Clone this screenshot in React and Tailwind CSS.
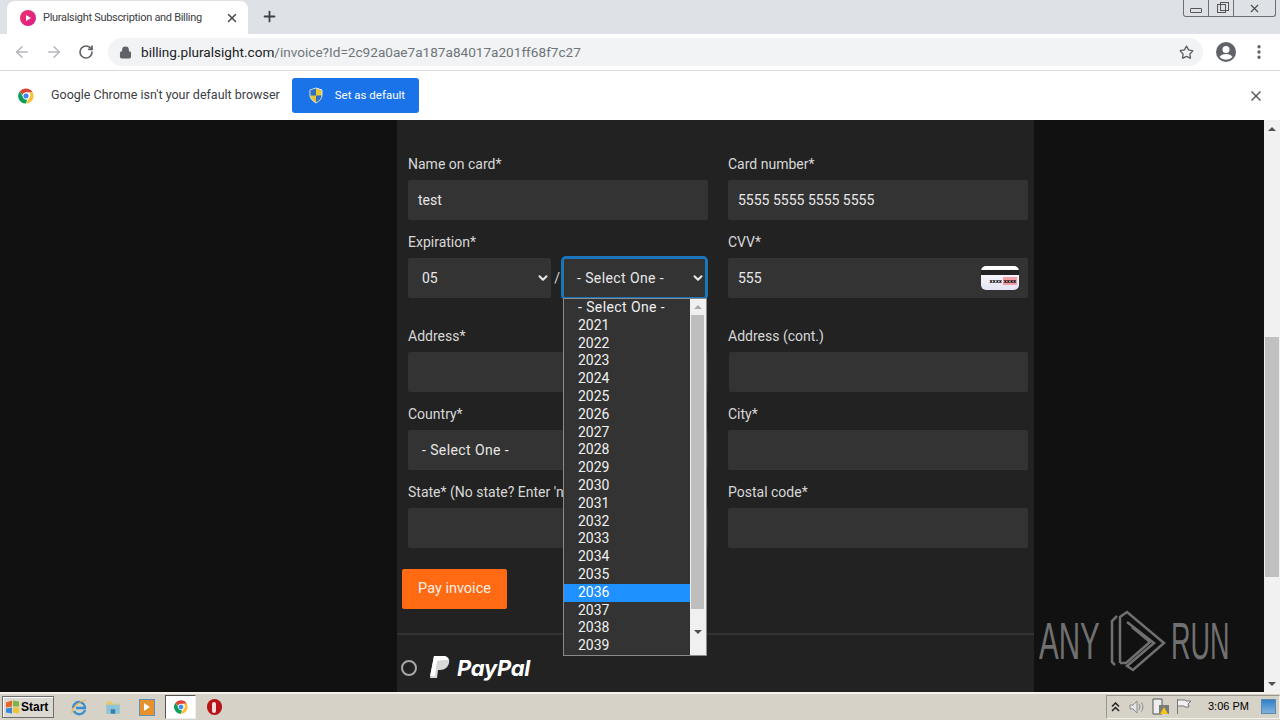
import { ArrowLeft, ArrowRight, RotateCw, Lock, Star, MoreVertical, X, Plus, ChevronDown } from 'lucide-react'

const years = ['- Select One -', '2021', '2022', '2023', '2024', '2025', '2026', '2027', '2028', '2029', '2030', '2031', '2032', '2033', '2034', '2035', '2036', '2037', '2038', '2039']

function ChromeLogo({ size = 18 }) {
  return (
    <svg width={size} height={size} viewBox="0 0 48 48">
      <path d="M24 4a20 20 0 0 1 17.3 10H24a10 10 0 0 0-9.6 7.2L7.6 11.5A20 20 0 0 1 24 4z" fill="#db4437" />
      <path d="M41.3 14A20 20 0 0 1 24 44l8.6-15a10 10 0 0 0-.6-15z" fill="#fbc02d" />
      <path d="M24 44A20 20 0 0 1 7.6 11.5l8.7 15A10 10 0 0 0 27 33.6z" fill="#0f9d58" />
      <circle cx="24" cy="24" r="8" fill="#4285f4" stroke="#fff" strokeWidth="2" />
    </svg>
  )
}

function Field({ label, value, className = '', inputClassName = '', children }) {
  return (
    <div className={`flex flex-col ${className}`}>
      <label className="h-[20px] text-[14px] leading-[20px] text-[#d8d8d8] whitespace-nowrap">{label}</label>
      <div className={`relative mt-[6px] flex h-[40px] items-center rounded-[2px] bg-[#333333] pl-[10px] text-[14px] text-[#e8e8e8] ${inputClassName}`}>
        {value}
        {children}
      </div>
    </div>
  )
}

function FakeSelect({ value, className = '' }) {
  return (
    <div className={`flex items-center justify-between rounded-[2px] bg-[#333333] text-[14px] text-[#e8e8e8] ${className}`}>
      <span>{value}</span>
      <ChevronDown size={14} strokeWidth={3.5} className="text-[#e8e8e8]" />
    </div>
  )
}

function YearList() {
  return (
    <div className="absolute left-[563px] top-[178px] z-10 flex h-[358px] w-[144px] border border-[#8a8a8a] bg-[#333333]">
      <ul className="flex-1 text-[14px] text-[#f0f0f0]">
        {years.map((y, i) => (
          <li key={y} className={`h-[17.8px] pl-[14px] leading-[16px] ${i === 0 ? 'tracking-[0.4px]' : ''} ${y === '2036' ? 'bg-[#1e90ff] text-white' : ''}`}>{y}</li>
        ))}
      </ul>
      <div className="flex w-[16px] flex-col bg-[#f0f0f0]">
        <div className="flex h-[16px] items-center justify-center">
          <div className="h-0 w-0 border-x-[4px] border-b-[4px] border-x-transparent border-b-[#a8a8a8]" />
        </div>
        <div className="ml-[1px] h-[294px] w-[13px] bg-[#bebebe]" />
        <div className="flex flex-1 items-center justify-center">
          <div className="h-0 w-0 border-x-[4px] border-t-[4px] border-x-transparent border-t-[#505050]" />
        </div>
      </div>
    </div>
  )
}

function AnyRun() {
  return (
    <div className="absolute left-[1039px] top-[490px] flex h-[62px] items-center text-[#707070] [font-family:'Liberation_Sans',sans-serif]">
      <span className="w-[71px] origin-left scale-x-[0.58] whitespace-nowrap text-[51px] leading-none">ANY</span>
      <svg width="56" height="62" viewBox="0 0 56 62" fill="none" stroke="currentColor" strokeWidth="2.5">
        <path d="M7 6 2 11v41l3 3" />
        <path d="M10 53V7l7-5 37 31-31 27-6-4 27-23-27-21" />
        <path d="M10 53h6l24-21-18-15" />
      </svg>
      <span className="ml-[5px] w-[58px] origin-left scale-x-[0.53] whitespace-nowrap text-[51px] leading-none">RUN</span>
    </div>
  )
}

function Taskbar() {
  return (
    <div className="flex h-[28px] items-center border-t-2 border-t-[#f4f2ec] bg-[#d6d2c8] [font-family:'Liberation_Sans',sans-serif]">
      <div className="ml-[2px] flex h-[22px] w-[52px] items-center border border-[#6d6d6d] bg-[#dcd9d0] pl-[2px] text-[12px] font-bold text-black shadow-[inset_1px_1px_0_#fff]">
        <svg width="16" height="16" viewBox="0 0 16 15">
          <path d="M1 3 7 1v6L1 8z" fill="#e8622c" />
          <path d="M8 1l6 1v5H8z" fill="#7db343" />
          <path d="M1 9l6-1v6l-6-1z" fill="#3a86d8" />
          <path d="M8 8h6v6l-6-1z" fill="#f2c431" />
        </svg>
        Start
      </div>
      <div className="ml-[12px] flex w-[26px] justify-center">
        <svg width="18" height="18" viewBox="0 0 18 18" fill="none">
          <path d="M3 10a6 6 0 0 1 12 0H6M15 12a6 6 0 0 1-11 1" stroke="#3b8fd0" strokeWidth="2.4" />
          <path d="M2 15C1 11 9 3 16 2" stroke="#e5b53a" strokeWidth="1.2" />
        </svg>
      </div>
      <div className="ml-[8px] flex w-[26px] justify-center">
        <svg width="18" height="18" viewBox="0 0 16 16">
          <path d="M2 3h5l1 2h6v9H2z" fill="#e6c96c" />
          <path d="M2 6h12v8H2z" fill="#8cc4dc" />
          <path d="M6 10h4v4H6z" fill="#3b7fa8" />
        </svg>
      </div>
      <div className="ml-[8px] flex w-[26px] justify-center">
        <div className="flex h-[17px] w-[16px] items-center justify-center border border-[#5a93c0] bg-[#e8902c]">
          <div className="h-0 w-0 border-y-[4px] border-l-[6px] border-y-transparent border-l-white" />
        </div>
      </div>
      <div className="ml-[5px] flex h-[24px] w-[31px] items-center justify-center border border-[#555] border-b-[#eee] border-r-[#eee] bg-white">
        <ChromeLogo size={16} />
      </div>
      <div className="ml-[5px] flex w-[26px] justify-center">
        <div className="flex h-[16px] w-[15px] items-center justify-center rounded-full bg-[#b81218]">
          <div className="h-[11px] w-[4px] rounded-full bg-[#f2dede]" />
        </div>
      </div>
      <div className="ml-auto mb-[1px] flex h-[24px] w-[174px] items-center border border-[#9a978f] border-b-[#f4f2ec] border-r-[#f4f2ec] text-black">
        <svg className="ml-[4px]" width="9" height="10" viewBox="0 0 9 10" fill="none" stroke="#222" strokeWidth="1.5">
          <path d="M1 4.500 4.500 1 8 4.500M1 9l3.500-3.500L8 9" />
        </svg>
        <svg className="ml-[8px]" width="18" height="16" viewBox="0 0 18 16" fill="none" stroke="#8c8c8c">
          <path d="M2 6h3l4-4v12l-4-4H2z" fill="#e4e4e4" />
          <path d="M11 5c1 2 1 4 0 6M13.500 3.500c2 3 2 6 0 9" />
        </svg>
        <svg className="ml-[6px]" width="18" height="17" viewBox="0 0 18 17">
          <path d="M1 1h9v15H1z" fill="#eeeeee" stroke="#555" />
          <path d="M7 7h10v9H7z" fill="#7a7a7a" />
          <path d="M12 9l4 7H8z" fill="#f5c518" />
        </svg>
        <svg className="ml-[6px]" width="16" height="17" viewBox="0 0 16 17" fill="none" stroke="#777">
          <path d="M1.500 1v15" />
          <path d="M2 2h7l1 1h5l-3 3 1 3H9L8 8H2" fill="#f0f0f0" />
        </svg>
        <span className="ml-[16px] whitespace-nowrap text-[11px]">3:06 PM</span>
        <div className="ml-auto mr-[3px] h-[15px] w-[15px] border border-[#5d89ac] bg-gradient-to-b from-[#2f80c8] to-[#7fb2dc]" />
      </div>
    </div>
  )
}

export default function App() {
  return (
    <div className="flex h-[720px] w-[1280px] flex-col overflow-hidden bg-white [font-family:'Liberation_Sans',sans-serif]">
      {/* tab strip */}
      <div className="relative flex h-[34px] bg-[#dee1e6]">
        <div className="ml-[7px] mt-[1px] flex h-[33px] w-[241px] items-center rounded-t-[8px] bg-white pl-[13px]">
          <div className="flex h-[16px] w-[16px] shrink-0 items-center justify-center rounded-full bg-gradient-to-br from-[#f0326a] to-[#d91a8c]">
            <div className="h-0 w-0 border-y-[3px] border-l-[5px] border-y-transparent border-l-white" />
          </div>
          <span className="ml-[7px] w-[160px] shrink-0 whitespace-nowrap pt-[1px] text-[11px] tracking-[-0.3px] text-[#3c4043] [font-family:Roboto,sans-serif]">Pluralsight Subscription and Billing</span>
          <X size={14} strokeWidth={2.5} className="ml-[22px] shrink-0 text-[#45494d]" />
        </div>
        <Plus size={17} strokeWidth={2.5} className="ml-[13px] mt-[8px] text-[#3c4043]" />
        <div className="absolute right-[4px] top-0 flex h-[17px] w-[93px] rounded-b-[3px] border border-t-0 border-[#6b7078] bg-[#dee1e6] text-[#4a4a4a]">
          <div className="flex w-[25px] items-end justify-center border-r border-[#6b7078] pb-[3px]">
            <div className="h-[5px] w-[12px] rounded-[1px] border border-[#555]" />
          </div>
          <div className="flex w-[25px] items-center justify-center border-r border-[#6b7078]">
            <div className="relative h-[9px] w-[9px] border border-[#555]">
              <div className="absolute -right-[4px] -top-[3px] h-[9px] w-[9px] border border-[#555]" />
            </div>
          </div>
          <div className="flex flex-1 items-center justify-center">
            <X size={13} strokeWidth={2} />
          </div>
        </div>
      </div>

      {/* toolbar */}
      <div className="flex h-[37px] items-center border-b border-[#d9dadc] bg-white">
        <ArrowLeft size={18} strokeWidth={2} className="ml-[13px] text-[#b4b7bb]" />
        <ArrowRight size={18} strokeWidth={2} className="ml-[14px] text-[#b4b7bb]" />
        <RotateCw size={16} strokeWidth={2.5} className="ml-[15px] text-[#5f6368]" />
        <div className="ml-[14px] flex h-[28px] w-[1095px] items-center rounded-full bg-[#f1f3f4] pl-[11px]">
          <Lock size={13} strokeWidth={2.5} fill="#5f6368" className="text-[#5f6368]" />
          <span className="ml-[9px] whitespace-nowrap pt-[1px] text-[13.6px] text-[#202124] [font-family:Roboto,sans-serif]">
            billing.pluralsight.com<span className="text-[#70757a]">/invoice?Id=2c92a0ae7a187a84017a201ff68f7c27</span>
          </span>
          <Star size={15} strokeWidth={2.2} className="ml-auto mr-[9px] text-[#5f6368]" />
        </div>
        <svg className="ml-[13px]" width="20" height="20" viewBox="0 0 20 20">
          <circle cx="10" cy="10" r="10" fill="#5f6368" />
          <circle cx="10" cy="7.500" r="3.500" fill="#fff" />
          <path d="M3.500 15c2-4 11-4 13 0a9 9 0 0 1-13 0z" fill="#fff" />
        </svg>
        <MoreVertical size={18} strokeWidth={2.5} className="ml-[14px] text-[#5f6368]" />
      </div>

      {/* default browser bar */}
      <div className="flex h-[49px] items-center bg-white">
        <div className="ml-[17px]">
          <ChromeLogo size={18} />
        </div>
        <span className="ml-[16px] whitespace-nowrap text-[12.5px] text-[#3c4043] [font-family:Roboto,sans-serif]">Google Chrome isn't your default browser</span>
        <div className="ml-[12px] flex h-[35px] w-[127px] items-center rounded-[3px] bg-[#1a73e8] pl-[16px] text-[11.5px] text-white [font-family:Roboto,sans-serif]">
          <svg width="16" height="17" viewBox="0 0 16 17">
            <path d="M8 1l6 2v5c0 4-3 6-6 8-3-2-6-4-6-8V3z" fill="#e8c534" stroke="#dfe6ee" />
            <path d="M8 1.500v7H2.500V3zM8 8.500h5.500c0 3-2.500 5-5.500 7z" fill="#2f6fc4" />
          </svg>
          <span className="ml-[11px]">Set as default</span>
        </div>
        <X size={16} strokeWidth={2.5} className="ml-auto mr-[16px] text-[#5f6368]" />
      </div>

      {/* page */}
      <div className="relative flex min-h-0 flex-1 bg-[#111111] [font-family:Roboto,sans-serif]">
        <div className="ml-[397px] w-[637px] bg-[#222222] pl-[11px] pt-[34px]">
          <div className="grid w-[620px] grid-cols-[300px_300px] gap-x-[20px] gap-y-[12px]">
            <Field label="Name on card*" value="test" />
            <Field label="Card number*" value="5555 5555 5555 5555" />
            <div className="flex flex-col">
              <label className="h-[20px] text-[14px] leading-[20px] text-[#d8d8d8]">Expiration*</label>
              <div className="mt-[6px] flex h-[40px] items-center">
                <FakeSelect value="05" className="h-[40px] w-[144px] pl-[14px] pr-[1px]" />
                <span className="ml-[3px] text-[14px] text-[#d8d8d8]">/</span>
                <div className="ml-[1px] shrink-0 rounded-[5px] border-[3px] border-[#1b75bb]">
                  <FakeSelect value="- Select One -" className="h-[38px] w-[141px] pl-[13px] tracking-[0.4px]" />
                </div>
              </div>
            </div>
            <Field label="CVV*" value="555">
              <div className="absolute right-[9px] top-[8px] flex h-[24px] w-[38px] flex-col rounded-[5px] bg-gradient-to-b from-white to-[#e4e4f4] pt-[4px]">
                <div className="h-[5px] bg-[#222]" />
                <div className="mt-[2px] flex justify-end gap-[1px] pr-[2px] text-[6px] font-bold leading-[8px] text-black">
                  <span>xxxx</span>
                  <span className="bg-[#f4a0a8] px-[1px]">xxxx</span>
                </div>
              </div>
            </Field>
            <Field label="Address*" value="" className="mt-[16px]" />
            <Field label="Address (cont.)" value="" className="mt-[16px]" inputClassName="ml-[1px]" />
            <Field label="Country*" value="- Select One -" inputClassName="pl-[14px] tracking-[0.4px]" />
            <Field label="City*" value="" />
            <Field label="State* (No state? Enter 'n/a')" value="" />
            <Field label="Postal code*" value="" />
          </div>
          <button className="-ml-[6px] mt-[21px] h-[40px] w-[105px] rounded-[2px] bg-[#ff6a13] text-[14.5px] text-[#f5f0e8]">Pay invoice</button>
          <div className="-ml-[11px] mt-[24px] h-[2px] w-[637px] bg-[#333333]" />
          <div className="mt-[21px] flex items-center">
            <div className="-ml-[7px] h-[16px] w-[16px] rounded-full border-2 border-[#a8a8a8]" />
            <svg className="ml-[12px]" width="21" height="24" viewBox="0 0 21 24">
              <path d="M5 0h9c5 0 7 3 6 7s-4 7-9 7H9l-1 8H1z" fill="#d8d8d8" />
              <path d="M5 0h9c4 0 5 2 5 4-3 0-9 0-11 1L6 20H1z" fill="#ffffff" />
            </svg>
            <span className="ml-[7px] text-[22px] font-bold italic leading-none tracking-[-0.3px] text-white [font-family:Inter,sans-serif]">PayPal</span>
          </div>
        </div>
        <YearList />
        <AnyRun />
        <div className="ml-auto flex w-[16px] flex-col bg-[#f1f1f1]">
          <div className="flex h-[17px] items-center justify-center">
            <div className="h-0 w-0 border-x-[4px] border-b-[4px] border-x-transparent border-b-[#505050]" />
          </div>
          <div className="mt-[200px] ml-[1px] h-[240px] w-[14px] bg-[#c1c1c1]" />
          <div className="mt-auto flex h-[17px] items-center justify-center">
            <div className="h-0 w-0 border-x-[4px] border-t-[4px] border-x-transparent border-t-[#505050]" />
          </div>
        </div>
      </div>

      <Taskbar />
    </div>
  )
}
